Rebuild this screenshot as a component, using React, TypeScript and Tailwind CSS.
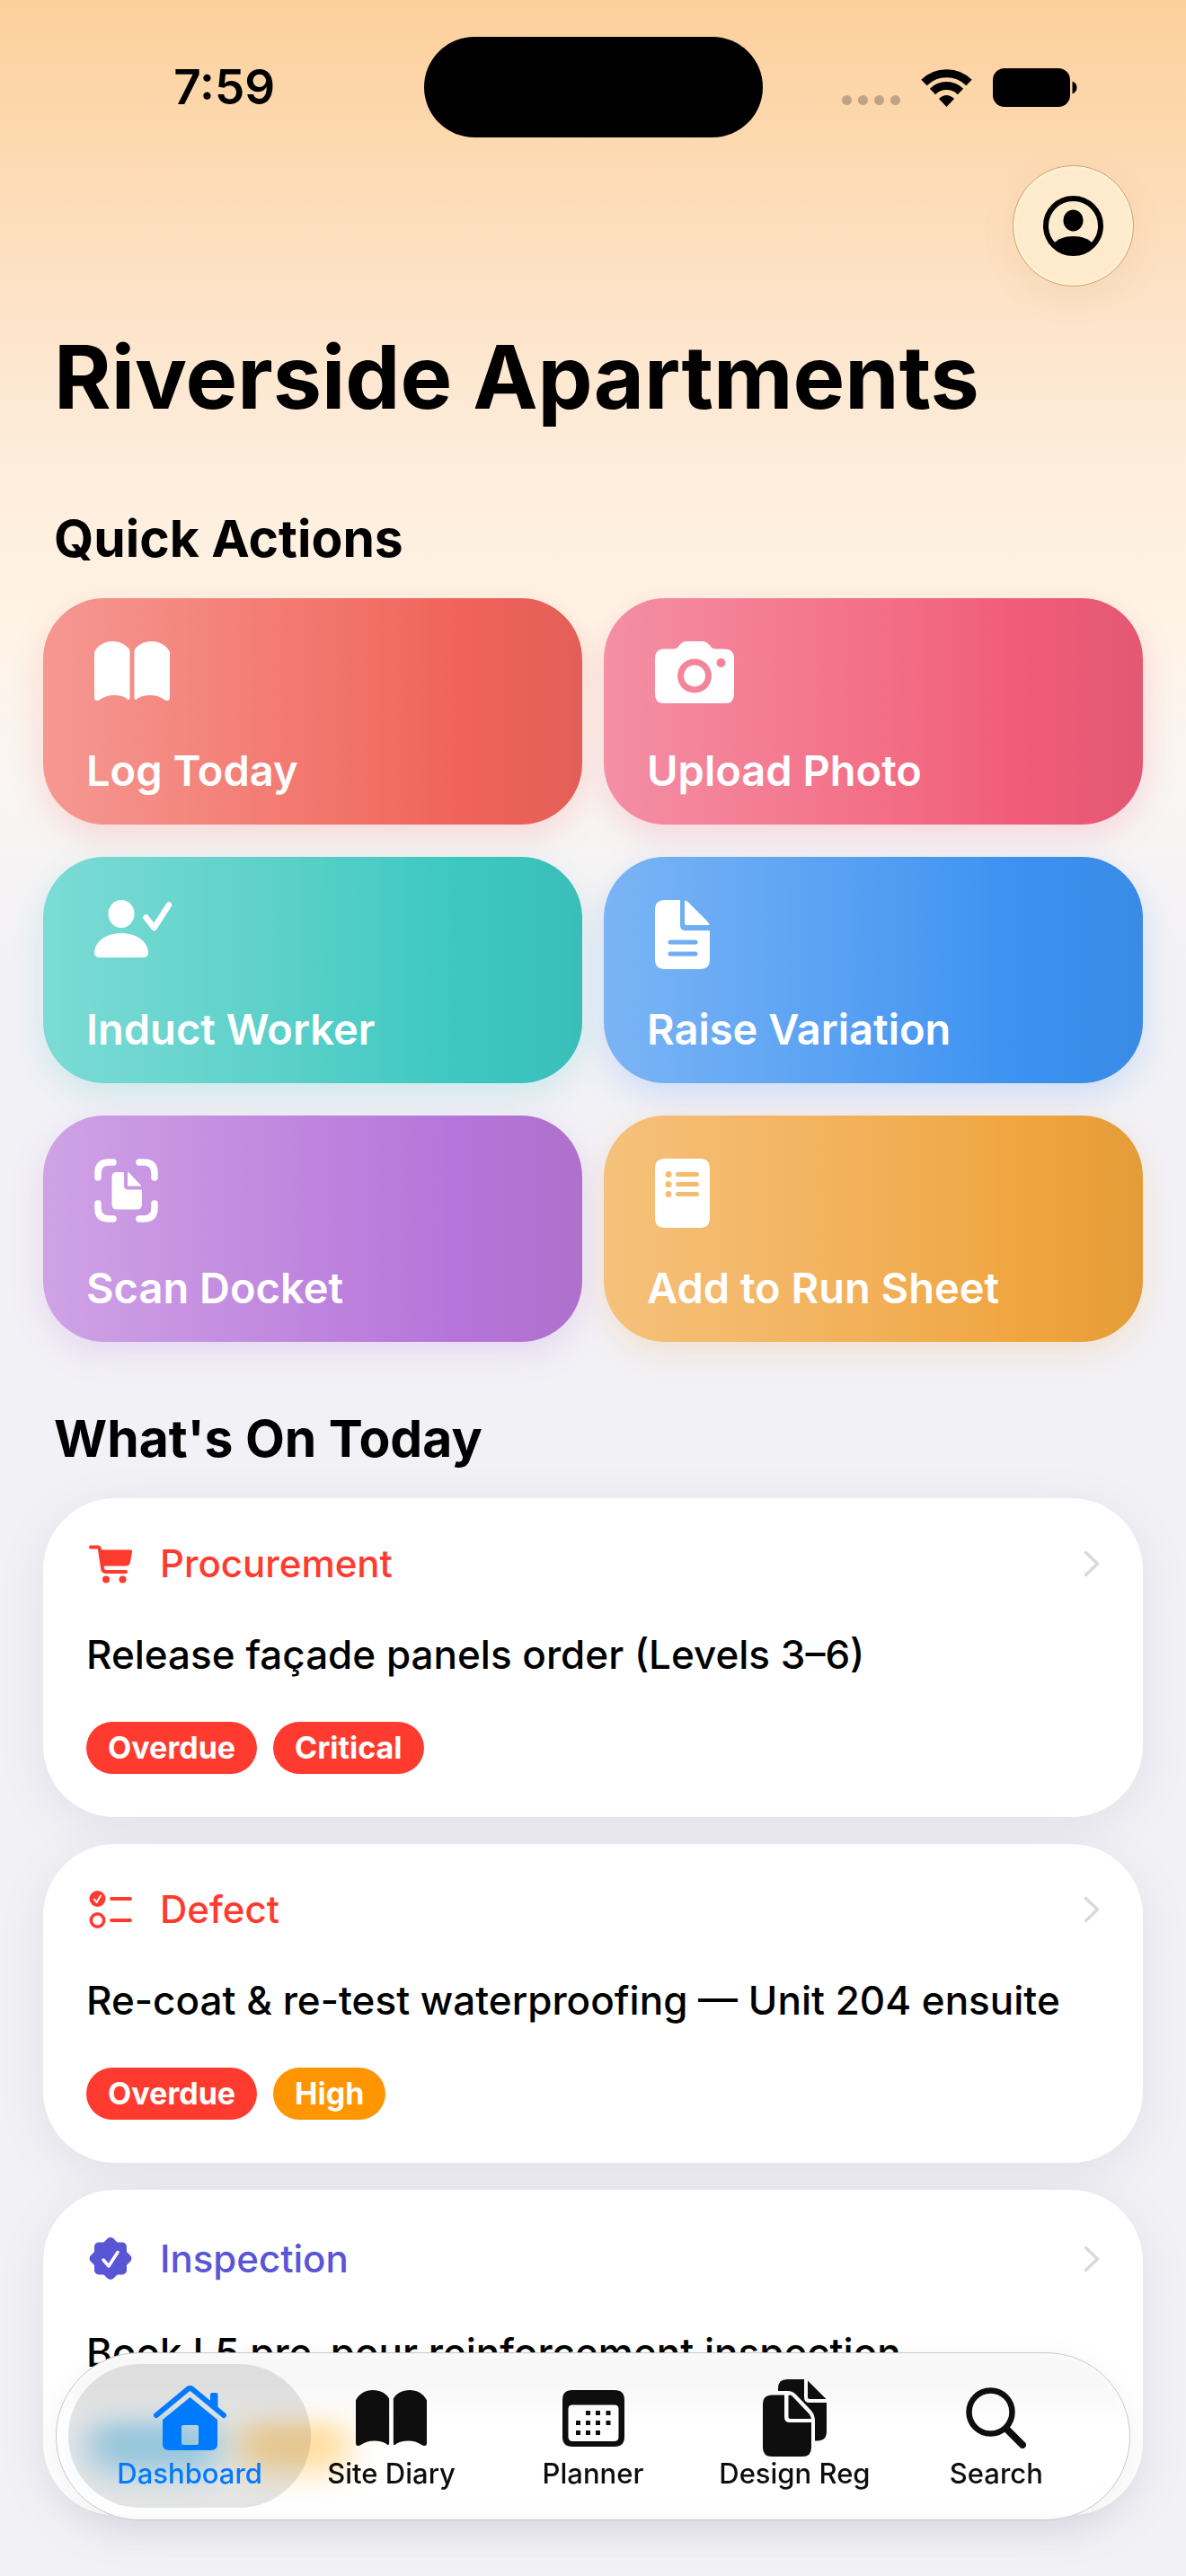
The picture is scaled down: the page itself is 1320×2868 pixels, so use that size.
import type { ReactNode } from "react";

type IconProps = { className?: string };

const BookIcon = ({ className }: IconProps) => (
  <svg className={className} viewBox="0 0 84 66" fill="currentColor" aria-hidden="true">
    <path d="M0 12C4 4 12 0 20 0c9 0 16 4 19.500 10v53q0 2-1.500 2-1 0-2-1.500C32 61 27 60 22 60c-6 0-11 1.500-16 5q-1.500 1-3 1-3 0-3-3z" />
    <path transform="translate(84 0) scale(-1 1)" d="M0 12C4 4 12 0 20 0c9 0 16 4 19.500 10v53q0 2-1.500 2-1 0-2-1.500C32 61 27 60 22 60c-6 0-11 1.500-16 5q-1.500 1-3 1-3 0-3-3z" />
  </svg>
);

const CameraIcon = ({ className }: IconProps) => (
  <svg className={className} viewBox="0 0 88 69" fill="currentColor" aria-hidden="true">
    <path
      fillRule="evenodd"
      d="M10 8.500h11q3 0 4.500-2l2.500-3Q31 0 35 0h18q4 0 7 3.500l2.500 3q1.500 2 4.500 2h10q11 0 11 11V59q0 10-10 10H10Q0 69 0 59V19.500q0-11 10-11zM44 19.500a19 19 0 1 0 0 38 19 19 0 0 0 0-38zM73.500 19a5 5 0 1 0 0 10 5 5 0 0 0 0-10z"
    />
    <circle cx="44" cy="38.500" r="12" />
  </svg>
);

const WorkerIcon = ({ className }: IconProps) => (
  <svg className={className} viewBox="0 0 88 66" fill="currentColor" aria-hidden="true">
    <ellipse cx="30" cy="15.500" rx="14.500" ry="15.500" />
    <path d="M0 58C1 46 13 37 30 37s29 9 30 21q0 6-6 6H6q-6 0-6-6z" />
    <path d="M57.500 19.500 66.500 31 83 5.500" fill="none" stroke="currentColor" strokeWidth="6.500" strokeLinecap="round" strokeLinejoin="round" />
  </svg>
);

const DocIcon = ({ className }: IconProps) => (
  <svg className={className} viewBox="0 0 61 77" fill="currentColor" aria-hidden="true">
    <path
      fillRule="evenodd"
      d="M11 0h17v28q0 6 6 6h27v32q0 11-11 11H11Q0 77 0 66V11Q0 0 11 0zM17 44.500a2.500 2.500 0 0 0 0 5h28a2.500 2.500 0 0 0 0-5zM17 57.500a2.500 2.500 0 0 0 0 5h28a2.500 2.500 0 0 0 0-5z"
    />
    <path d="M33 1v25q0 2 2 2h25.500q-.5-2.500-2.500-4.500L36.500 2Q34 0 33 1z" />
  </svg>
);

const ScanIcon = ({ className }: IconProps) => (
  <svg className={className} viewBox="0 0 71 71" fill="currentColor" aria-hidden="true">
    <path
      d="M4 21v-5Q4 4 16 4h5M50 4h5q12 0 12 12v5M67 50v5q0 12-12 12h-5M21 67h-5Q4 67 4 55v-5"
      fill="none"
      stroke="currentColor"
      strokeWidth="7.500"
      strokeLinecap="round"
    />
    <path d="M25 15h8v15q0 4.500 4.500 4.500H53V51q0 5.500-5.500 5.500H25q-5.500 0-5.500-5.500V20.500Q19.500 15 25 15z" />
    <path d="M37 15.500v14q0 1 1 1h14.500L39 16q-1.500-1.500-2-.5z" />
  </svg>
);

const SheetIcon = ({ className }: IconProps) => (
  <svg className={className} viewBox="0 0 61 77" fill="currentColor" aria-hidden="true">
    <path
      fillRule="evenodd"
      d="M11 0h39q11 0 11 11v55q0 11-11 11H11Q0 77 0 66V11Q0 0 11 0zM15 14a3.500 3.500 0 1 0 0 7 3.500 3.500 0 0 0 0-7zM15 25a3.500 3.500 0 1 0 0 7 3.500 3.500 0 0 0 0-7zM15 36a3.500 3.500 0 1 0 0 7 3.500 3.500 0 0 0 0-7zM25.500 15a2.500 2.500 0 0 0 0 5h21a2.500 2.500 0 0 0 0-5zM25.500 26a2.500 2.500 0 0 0 0 5h21a2.500 2.500 0 0 0 0-5zM25.500 37a2.500 2.500 0 0 0 0 5h21a2.500 2.500 0 0 0 0-5z"
    />
  </svg>
);

const CartIcon = ({ className }: IconProps) => (
  <svg className={className} viewBox="0 0 48 43" fill="currentColor" aria-hidden="true">
    <path d="M2 2.500h8q1.500 0 2 2.500l3 21q.5 4 4 4h22" fill="none" stroke="currentColor" strokeWidth="4" strokeLinecap="round" strokeLinejoin="round" />
    <path d="M11 5.500h35q2.500 0 2 2.500l-2 11q-1 4.500-5 4.500H14z" />
    <circle cx="19" cy="38.500" r="4" />
    <circle cx="37.500" cy="38.500" r="4" />
  </svg>
);

const ChecklistIcon = ({ className }: IconProps) => (
  <svg className={className} viewBox="0 0 48 42" fill="none" stroke="currentColor" strokeWidth="4" strokeLinecap="round" strokeLinejoin="round" aria-hidden="true">
    <circle cx="9.500" cy="9" r="9" fill="currentColor" stroke="none" />
    <path d="m6 9.500 2.500 3.500L13 5.500" stroke="#fff" strokeWidth="2" />
    <circle cx="9.500" cy="33" r="7.200" strokeWidth="3.600" />
    <path d="M25 9h21M25 33h21" />
  </svg>
);

const SealIcon = ({ className }: IconProps) => (
  <svg className={className} viewBox="0 0 48 48" fill="currentColor" aria-hidden="true">
    <rect x="6" y="6" width="36" height="36" rx="5" />
    <rect x="6" y="6" width="36" height="36" rx="5" transform="rotate(45 24 24)" />
    <path d="m16 25.500 6 7 10-15.500" fill="none" stroke="#fff" strokeWidth="3.500" strokeLinecap="round" strokeLinejoin="round" />
  </svg>
);

const HouseIcon = ({ className }: IconProps) => (
  <svg className={className} viewBox="0 0 81 72" fill="currentColor" aria-hidden="true">
    <path d="M3 33 38 4q2.500-2 5 0l35 29" fill="none" stroke="currentColor" strokeWidth="6" strokeLinecap="round" strokeLinejoin="round" />
    <path d="M63 10q0-2 2-2h4.500q2 0 2 2v18L63 20z" />
    <path fillRule="evenodd" d="M40.500 13 71 38v27q0 7-7 7H17q-7 0-7-7V38zM33 44q-2 0-2 2v18q0 2 2 2h15q2 0 2-2V46q0-2-2-2z" />
  </svg>
);

const PlannerIcon = ({ className }: IconProps) => (
  <svg className={className} viewBox="0 0 69 63" fill="currentColor" aria-hidden="true">
    <path fillRule="evenodd" d="M11 0h47q11 0 11 11v41q0 11-11 11H11Q0 63 0 52V11Q0 0 11 0zM11 16.500q-4.500 0-4.500 4.500v31q0 5 5 5h46q5 0 5-5V21q0-4.500-4.500-4.500z" />
    <path d="M26 23h5v5h-5zM37 23h5v5h-5zM48.500 23h5v5h-5zM15 34h5v5h-5zM26 34h5v5h-5zM37 34h5v5h-5zM48.500 34h5v5h-5zM15 45h5v5h-5zM26 45h5v5h-5zM37 45h5v5h-5z" />
  </svg>
);

const DocsIcon = ({ className }: IconProps) => (
  <svg className={className} viewBox="0 0 71 86" fill="currentColor" aria-hidden="true">
    <path d="M27 0h19v20q0 6 6 6h19v32q0 10.500-10.500 10.500H58V46q0-6-4-11L37 17q-4-4-9-4H17v-3Q17 0 27 0z" />
    <path d="M50 1.500V20q0 2 2 2h18.500z" />
    <path d="M10 17.500h14V42q0 6 6 6h24v28q0 10-10 10H10Q0 86 0 76V27.500q0-10 10-10z" />
    <path d="M28.500 18.500V42q0 2 2 2H54q-.5-3-3-6L33 19q-3-2.500-4.500-.5z" />
  </svg>
);

const SearchIcon = ({ className }: IconProps) => (
  <svg className={className} viewBox="0 0 67 68" fill="none" stroke="currentColor" strokeLinecap="round" aria-hidden="true">
    <circle cx="27.500" cy="27.500" r="24" strokeWidth="6.500" />
    <path d="m46 47 17 17" strokeWidth="8" />
  </svg>
);

const ChevronIcon = ({ className }: IconProps) => (
  <svg className={className} viewBox="0 0 18 30" fill="none" stroke="currentColor" strokeWidth="3.500" strokeLinecap="round" strokeLinejoin="round" aria-hidden="true">
    <path d="m2.500 2.500 13 12.500-13 12.500" />
  </svg>
);

const quickActions = [
  {
    label: "Log Today",
    icon: <BookIcon className="w-[84px]" />,
    style: "from-[#f59892] via-[#f0635a] to-[#e35f58] shadow-[0_12px_36px_rgba(240,99,90,0.2)]",
  },
  {
    label: "Upload Photo",
    icon: <CameraIcon className="w-[88px]" />,
    style: "from-[#f48fa4] via-[#f15c78] to-[#e35873] shadow-[0_12px_36px_rgba(241,92,120,0.2)]",
  },
  {
    label: "Induct Worker",
    icon: <WorkerIcon className="w-[88px]" />,
    style: "from-[#7cdbd5] via-[#3bc8c1] to-[#3bbeb9] shadow-[0_12px_36px_rgba(59,200,193,0.2)]",
  },
  {
    label: "Raise Variation",
    icon: <DocIcon className="w-[61px]" />,
    style: "from-[#7bb4f5] via-[#3b92f1] to-[#398be5] shadow-[0_12px_36px_rgba(59,146,241,0.2)]",
  },
  {
    label: "Scan Docket",
    icon: <ScanIcon className="w-[71px]" />,
    style: "from-[#cfa2e5] via-[#b674da] to-[#af70cc] shadow-[0_12px_36px_rgba(182,116,218,0.2)]",
  },
  {
    label: "Add to Run Sheet",
    icon: <SheetIcon className="w-[61px]" />,
    style: "from-[#f5c17b] via-[#f0a640] to-[#e49c38] shadow-[0_12px_36px_rgba(240,166,64,0.2)]",
  },
];

const tabs = [
  { label: "Dashboard", icon: <HouseIcon className="w-[81px]" />, active: true },
  { label: "Site Diary", icon: <BookIcon className="w-[79px]" /> },
  { label: "Planner", icon: <PlannerIcon className="w-[69px]" /> },
  { label: "Design Reg", icon: <DocsIcon className="w-[71px]" /> },
  { label: "Search", icon: <SearchIcon className="w-[67px]" /> },
];

const Tag = ({ color, children }: { color: string; children?: ReactNode }) => (
  <span className={`h-[58px] rounded-full px-6 text-[34px] leading-[58px] font-bold text-white ${color}`}>{children}</span>
);

type TaskCardProps = {
  kind: string;
  color: string;
  icon: ReactNode;
  title: string;
  children: ReactNode;
};

const TaskCard = ({ kind, color, icon, title, children }: TaskCardProps) => (
  <li>
    <a href="#" className="block rounded-[80px] bg-white p-12 shadow-[0_12px_60px_rgba(20,20,50,0.07)]">
      <div className={`flex items-center text-[42px] leading-[50px] font-medium ${color}`}>
        <span className="mr-7 flex w-[54px] justify-center">{icon}</span>
        <span>{kind}</span>
        <ChevronIcon className="ml-auto w-[18px] text-[#d9d9db]" />
      </div>
      <p className="mt-12 text-[44px] leading-[56px] font-medium text-black">{title}</p>
      <div className="mt-[47px] flex gap-[18px]">{children}</div>
    </a>
  </li>
);

const StatusBar = () => (
  <div className="grid grid-cols-[1fr_auto_1fr] items-center pt-[41px]">
    <span className="pr-5 text-center text-[53px] leading-[60px] font-semibold">7:59</span>
    <div className="h-[112px] w-[377px] rounded-full bg-black" />
    <div className="flex items-center justify-center gap-[23px] pl-4">
      <div className="flex gap-[7px] pt-[28px]">
        <i className="size-[11px] rounded-full bg-[#c0a284]" />
        <i className="size-[11px] rounded-full bg-[#c0a284]" />
        <i className="size-[11px] rounded-full bg-[#c0a284]" />
        <i className="size-[11px] rounded-full bg-[#c0a284]" />
      </div>
      <svg className="w-[57px]" viewBox="0 0 57 43" fill="none" stroke="#000" aria-hidden="true">
        <path d="M3.500 16a35.500 35.500 0 0 1 50 0" strokeWidth="9" />
        <path d="M13 26a22 22 0 0 1 31 0" strokeWidth="9" />
        <path d="M28.500 43 20 34q8.500-8 17 0z" fill="#000" stroke="none" />
      </svg>
      <svg className="w-[94px]" viewBox="0 0 94 43" aria-hidden="true">
        <rect width="86" height="43" rx="13" />
        <path d="M88.500 14.500q5 2 5 7t-5 7z" />
      </svg>
    </div>
  </div>
);

const App = () => {
  return (
    <main className="min-h-screen bg-[#f2f1f6] bg-[linear-gradient(180deg,#fcd09b_0px,#fddfbf_270px,#fdebd8_480px,#fff3e5_680px,#f9f5f3_880px,#f2f1f6_1080px)] px-12 pb-[64px] font-[Inter,'Liberation_Sans',sans-serif] text-black">
      <StatusBar />

      <header>
        <div className="flex justify-end pt-[31px] pr-[10px]">
          <button
            type="button"
            aria-label="Profile"
            className="flex size-[135px] items-center justify-center rounded-full border border-[#c9a47c] bg-[#feebcd] shadow-[0_12px_40px_rgba(160,100,50,0.08),inset_0_0_5px_#fffbd8]"
          >
            <svg className="w-[67px]" viewBox="0 0 67 67" aria-hidden="true">
              <circle cx="33.500" cy="33.500" r="30.500" fill="none" stroke="#000" strokeWidth="6" />
              <ellipse cx="33.500" cy="27.500" rx="11" ry="12" />
              <path d="M12 53C16 48 24 45 33.500 45S51 48 55 53Q46 64 33.500 64T12 53z" />
            </svg>
          </button>
        </div>
        <h1 className="mt-[41px] ml-3 text-[97px] leading-[120px] font-bold">Riverside Apartments</h1>
      </header>

      {/* Quick actions */}
      <section>
        <h2 className="mt-[84px] ml-3 text-[57px] leading-[72px] font-bold">Quick Actions</h2>
        <div className="mt-[30px] grid grid-cols-2 gap-x-6 gap-y-9">
          {quickActions.map((action) => (
            <button
              key={action.label}
              type="button"
              className={`flex min-h-[252px] flex-col items-start justify-between rounded-[68px] bg-linear-to-r via-77% px-12 pt-12 pb-8 text-left text-white ${action.style}`}
            >
              <span className="ml-[9px]">{action.icon}</span>
              <span className="text-[47px] leading-[56px] font-semibold">{action.label}</span>
            </button>
          ))}
        </div>
      </section>

      {/* Today's tasks */}
      <section>
        <h2 className="mt-[72px] ml-3 text-[57px] leading-[72px] font-bold">What's On Today</h2>
        <ul className="mt-[30px] flex flex-col gap-[30px]">
          <TaskCard kind="Procurement" color="text-[#ff3b30]" icon={<CartIcon className="w-[48px]" />} title="Release façade panels order (Levels 3–6)">
            <Tag color="bg-[#ff3b30]">Overdue</Tag>
            <Tag color="bg-[#ff3b30]">Critical</Tag>
          </TaskCard>
          <TaskCard kind="Defect" color="text-[#ff3b30]" icon={<ChecklistIcon className="w-[48px]" />} title="Re-coat & re-test waterproofing — Unit 204 ensuite">
            <Tag color="bg-[#ff3b30]">Overdue</Tag>
            <Tag color="bg-[#ff9500]">High</Tag>
          </TaskCard>
          <TaskCard kind="Inspection" color="text-[#5856d6]" icon={<SealIcon className="h-[57px] w-[48px]" />} title="Book L5 pre-pour reinforcement inspection">
            <Tag color="w-[150px] bg-[#32ade6]" />
            <Tag color="w-[127px] bg-[#ffb020]" />
          </TaskCard>
        </ul>
      </section>

      {/* Tab bar */}
      <nav className="fixed inset-x-[62px] bottom-[62px] flex rounded-full border border-[#c6c6ca] bg-linear-to-b from-[#f8f8f8] from-20% to-white/55 to-45% px-9 pt-7 pb-[33px] shadow-[0_12px_40px_rgba(20,20,50,0.06),inset_0_0_8px_#fff] backdrop-blur-[18px]">
        {tabs.map((tab) => (
          <a
            key={tab.label}
            href="#"
            aria-current={tab.active ? "page" : undefined}
            className={`relative flex flex-1 flex-col items-center text-[31px] leading-9 font-medium ${tab.active ? "text-[#007aff]" : "text-[#0e0e0e]"}`}
          >
            {tab.active && <span className="absolute -inset-x-[23px] -top-4 -bottom-5 rounded-full bg-black/10" />}
            <span className="relative flex h-[88px] items-center">{tab.icon}</span>
            <span className="relative whitespace-nowrap">{tab.label}</span>
          </a>
        ))}
      </nav>
    </main>
  );
};

export default App;
